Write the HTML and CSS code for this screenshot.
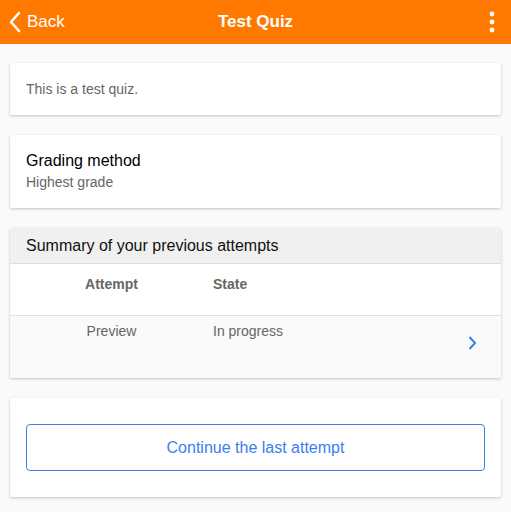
FILE: index.html
```html
<!DOCTYPE html>
<html>
<head>
<meta charset="utf-8">
<link rel="stylesheet" href="styles.css">
</head>
<body>
<header class="bar">
  <div class="back">
    <svg class="back-icon" width="14" height="22" viewBox="0 0 14 22"><path d="M11 2 L3 11 L11 20" fill="none" stroke="#fff" stroke-width="2.6" stroke-linecap="round" stroke-linejoin="round"/></svg>
    <span>Back</span>
  </div>
  <div class="title">Test Quiz</div>
  <div class="more">
    <svg width="6" height="22" viewBox="0 0 6 22"><circle cx="3" cy="3" r="2.4" fill="#fff"/><circle cx="3" cy="11" r="2.4" fill="#fff"/><circle cx="3" cy="19" r="2.4" fill="#fff"/></svg>
  </div>
</header>
<main class="content">
  <section class="card intro">This is a test quiz.</section>
  <section class="card grading">
    <div class="label">Grading method</div>
    <div class="value">Highest grade</div>
  </section>
  <section class="card attempts">
    <div class="card-head">Summary of your previous attempts</div>
    <div class="row head-row">
      <div class="c1">Attempt</div>
      <div class="c2">State</div>
    </div>
    <div class="row data-row">
      <div class="c1">Preview</div>
      <div class="c2">In progress</div>
      <svg class="chev" width="9" height="14" viewBox="0 0 9 14"><path d="M1.5 1 L7 7 L1.5 13" fill="none" stroke="#3a7ef0" stroke-width="2"/></svg>
    </div>
  </section>
  <section class="card action">
    <button class="btn">Continue the last attempt</button>
  </section>
</main>
</body>
</html>
```
FILE: styles.css
```css
* { box-sizing: border-box; }
html, body { margin: 0; padding: 0; }
body {
  background: #fafafa;
  font-family: "Liberation Sans", Arial, sans-serif;
  width: 511px;
  height: 512px;
  overflow: hidden;
}
.bar {
  height: 44px;
  background: #ff7900;
  color: #fff;
  display: flex;
  align-items: center;
  position: relative;
  padding: 0 8px;
}
.back {
  display: flex;
  align-items: center;
  gap: 5px;
  font-size: 17px;
}
.back-icon { margin-top: -1px; }
.title {
  position: absolute;
  left: 0; right: 0;
  text-align: center;
  font-size: 17px;
  font-weight: bold;
  pointer-events: none;
}
.more {
  margin-left: auto;
  margin-right: 8px;
  display: flex;
  align-items: center;
}
.content {
  padding: 19px 10px 0;
  display: flex;
  flex-direction: column;
  gap: 20px;
}
.card {
  background: #fff;
  border-radius: 2px;
  box-shadow: 0 1px 3px rgba(0,0,0,0.22);
}
.intro {
  height: 52px;
  padding: 0 16px;
  display: flex;
  align-items: center;
  font-size: 14px;
  color: #666;
}
.grading {
  height: 73px;
  padding: 17px 16px 0;
}
.label { font-size: 16px; color: #000; line-height: 18px; }
.value { font-size: 14px; color: #666; line-height: 16px; margin-top: 4px; }
.attempts { overflow: hidden; }
.card-head {
  background: #f0f0f0;
  height: 36px;
  padding: 0 16px;
  display: flex;
  align-items: center;
  font-size: 16px;
  color: #111;
  border-bottom: 1px solid #ddd;
}
.row {
  display: grid;
  grid-template-columns: 171px 1fr 14px;
  column-gap: 16px;
  padding: 0 16px;
  font-size: 14px;
  color: #666;
}
.row .c1 { text-align: center; }
.head-row {
  height: 52px;
  padding-top: 12px;
  font-weight: bold;
  background: #fff;
  border-bottom: 1px solid #ddd;
}
.data-row {
  height: 62px;
  padding-top: 7px;
  background: #fafafa;
}
.chev { margin-top: 13px; margin-left: -3px; }
.action {
  height: 99px;
  padding: 26px 16px 0;
}
.btn {
  width: 100%;
  height: 47px;
  background: #fff;
  border: 1px solid #3a7ef0;
  border-radius: 4px;
  color: #3a7ef0;
  font-family: "Liberation Sans", Arial, sans-serif;
  font-size: 16px;
}
```
